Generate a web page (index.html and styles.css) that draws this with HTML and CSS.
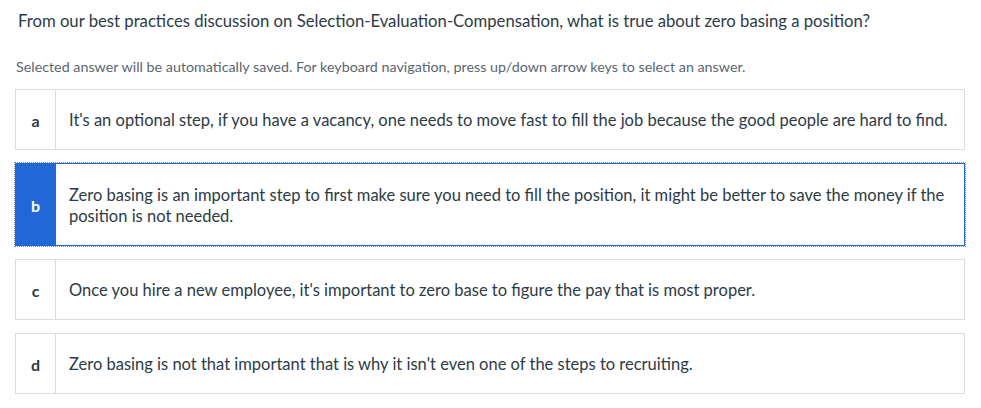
FILE: index.html
```html
<!DOCTYPE html>
<html lang="en">
<head>
  <meta charset="UTF-8" />
  <title>Quiz question</title>
  <link rel="stylesheet" href="styles.css">
</head>
<body>
  <div class="question">
    <p class="prompt">From our best practices discussion on Selection-Evaluation-Compensation, what is true about zero basing a position?</p>
    <p class="hint">Selected answer will be automatically saved. For keyboard navigation, press up/down arrow keys to select an answer.</p>

    <div class="answers">
      <div class="answer">
        <div class="letter">a</div>
        <div class="text">It's an optional step, if you have a vacancy, one needs to move fast to fill the job because the good people are hard to find.</div>
      </div>
      <div class="answer selected">
        <div class="letter">b</div>
        <div class="text">Zero basing is an important step to first make sure you need to fill the position, it might be better to save the money if the position is not needed.</div>
      </div>
      <div class="answer">
        <div class="letter">c</div>
        <div class="text">Once you hire a new employee, it's important to zero base to figure the pay that is most proper.</div>
      </div>
      <div class="answer">
        <div class="letter">d</div>
        <div class="text">Zero basing is not that important that is why it isn't even one of the steps to recruiting.</div>
      </div>
    </div>
  </div>
</body>
</html>
```

FILE: styles.css
```css
body {
  margin: 0;
  background-color: #fff;
  font-family: Lato, "Open Sans", sans-serif;
  color: #2d3b45;
}
.question {
  padding: 0 16px 0 15px;
}
.prompt {
  margin: 0;
  padding: 9px 0 0 3px;
  font-size: 16.7px;
  line-height: 24px;
}
.hint {
  margin: 25px 0 0 1px;
  font-size: 14.3px;
  line-height: 18px;
  color: #5b6670;
}
.answers {
  margin-top: 13px;
}
.answer {
  display: flex;
  min-height: 59px;
  margin-bottom: 13px;
  border: 1px solid #d9dde1;
  background-color: #fff;
}
.letter {
  flex: 0 0 39px;
  display: flex;
  align-items: center;
  justify-content: center;
  padding-top: 1px;
  border-right: 1px solid #d9dde1;
  font-size: 16px;
  font-weight: bold;
}
.text {
  flex: 1;
  display: flex;
  align-items: center;
  padding: 11px 14px 9px 13px;
  font-size: 16.5px;
  line-height: 21px;
}
.selected {
  min-height: 81px;
  border-color: #2267d8;
  outline: 1px dotted #7a8ea8;
}
.selected .letter {
  background-color: #2267d8;
  border-right-color: #2267d8;
  color: #fff;
}
```
